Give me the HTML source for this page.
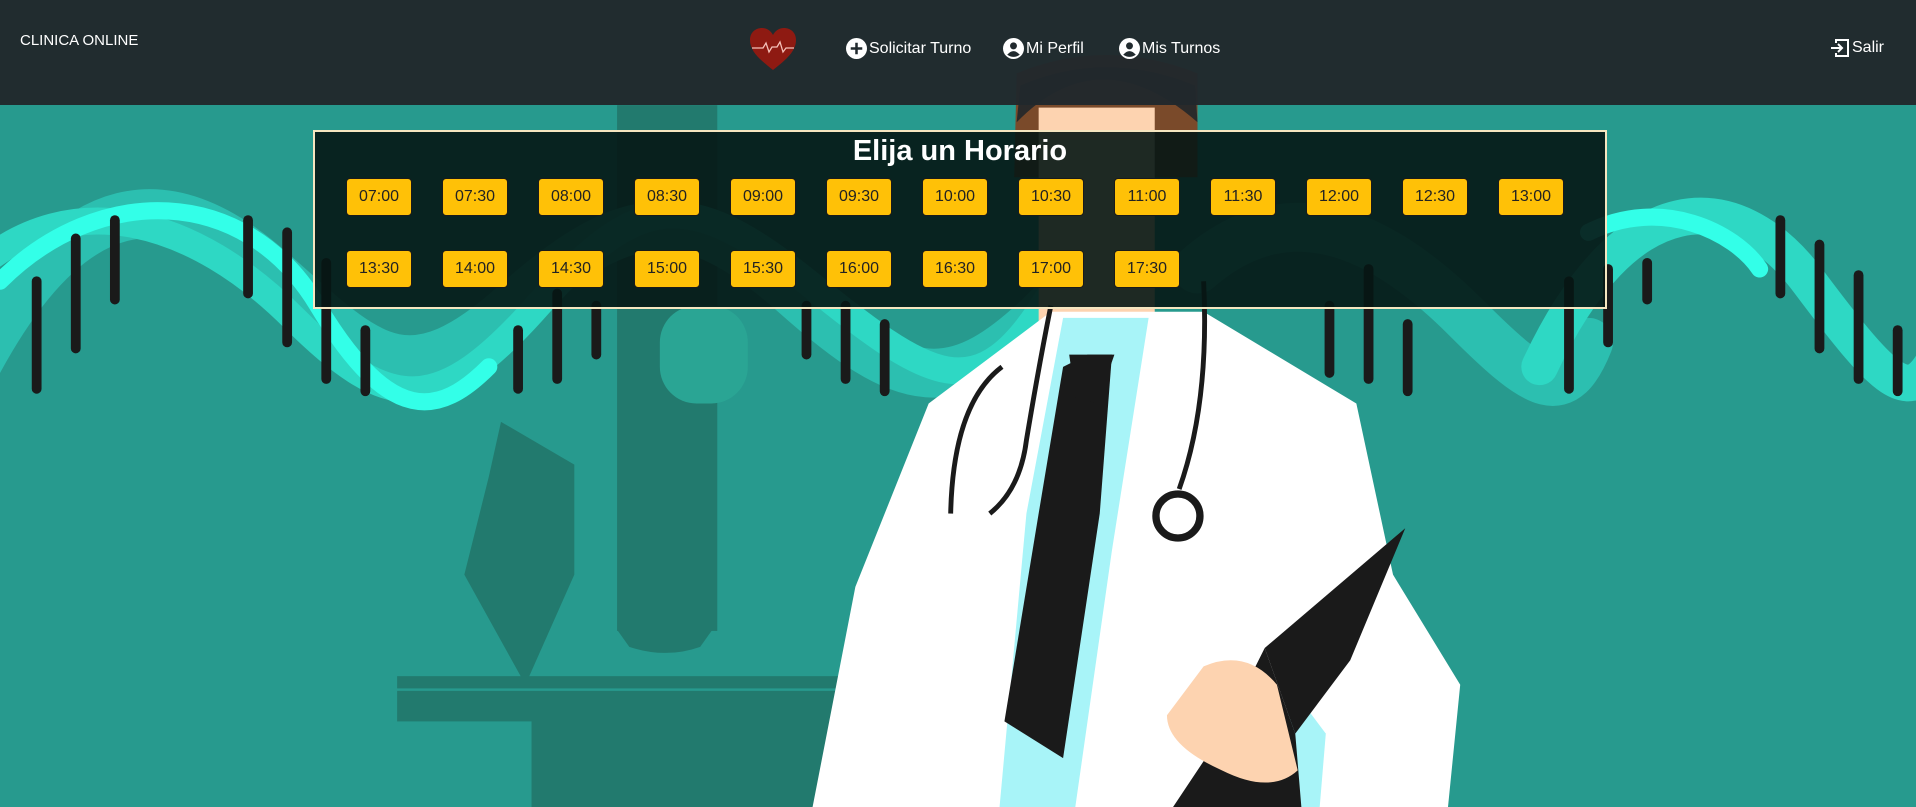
<!DOCTYPE html>
<html><head><meta charset="utf-8">
<style>
*{margin:0;padding:0;box-sizing:border-box}
body{width:1916px;height:807px;overflow:hidden;position:relative;font-family:"Liberation Sans",Roboto,sans-serif;background:#279a8e}
#bg{position:absolute;left:0;top:0}
nav{position:absolute;left:0;top:0;width:1916px;height:105px;background:rgba(33,40,44,.97);color:#fff;font-size:16px}
.brand{position:absolute;left:20px;top:32px;font-size:15px}
.item{position:absolute;top:38px;display:flex;align-items:center;gap:2px}
.panel{position:absolute;left:313px;top:130px;width:1294px;height:179px;background:rgba(6,22,20,.9);border:2px solid #f5e6c0}
.panel h1{position:absolute;left:0;right:0;top:3px;text-align:center;color:#fff;font-size:29px;font-weight:bold}
.b{position:absolute;width:66px;height:38px;background:#ffc107;border-radius:4px;border:1px solid #1a1a1a;color:#222;font-size:16px;display:flex;align-items:center;justify-content:center}
</style></head><body>
<svg id="bg" width="1916" height="807" viewBox="0 0 1568 660" preserveAspectRatio="none">
<rect width="1568" height="660" fill="#279a8e"/>
<g fill="#227a6e">
<rect x="505" y="86" width="82" height="430"/>
<polygon points="410,345 470,380 470,470 430,560 380,470 400,390"/>
<rect x="540" y="250" width="72" height="80" rx="30" fill="#2aa594"/>
<rect x="325" y="553" width="365" height="10"/>
<rect x="325" y="565" width="110" height="25"/>
<rect x="435" y="565" width="255" height="95"/>
<path d="M505 515 h78 l-10 14 q-28 10 -58 0z"/>
</g>
<g fill="none" stroke-linecap="round">
<path d="M-20 300 C60 150 140 150 220 220 S330 330 420 250 S560 160 650 240 S780 330 860 250" stroke="#2cbfb0" stroke-width="40"/>
<path d="M-20 220 C60 150 160 180 240 260 S360 340 440 250 S560 150 660 230 S800 340 860 240" stroke="#2ed8c4" stroke-width="22"/>
<path d="M0 230 C80 150 200 150 260 250 S360 340 400 300" stroke="#33ffe8" stroke-width="14"/>
<path d="M980 220 C1060 150 1140 200 1200 260 S1280 330 1300 280" stroke="#2cbfb0" stroke-width="40"/>
<path d="M1260 300 C1330 150 1420 150 1480 230 S1560 330 1580 300" stroke="#2ed8c4" stroke-width="30"/>
<path d="M1300 190 C1360 160 1420 190 1440 220" stroke="#33ffe8" stroke-width="14"/>
<g stroke="#1a1a1a" stroke-width="8">
<line x1="30" y1="230" x2="30" y2="318"/><line x1="62" y1="195" x2="62" y2="285"/><line x1="94" y1="180" x2="94" y2="245"/>
<line x1="203" y1="180" x2="203" y2="240"/><line x1="235" y1="190" x2="235" y2="280"/><line x1="267" y1="215" x2="267" y2="310"/><line x1="299" y1="270" x2="299" y2="320"/>
<line x1="424" y1="270" x2="424" y2="318"/><line x1="456" y1="240" x2="456" y2="310"/><line x1="488" y1="250" x2="488" y2="290"/>
<line x1="660" y1="250" x2="660" y2="290"/><line x1="692" y1="250" x2="692" y2="310"/><line x1="724" y1="265" x2="724" y2="320"/>
<line x1="1088" y1="250" x2="1088" y2="305"/><line x1="1120" y1="220" x2="1120" y2="310"/><line x1="1152" y1="265" x2="1152" y2="320"/>
<line x1="1284" y1="230" x2="1284" y2="318"/><line x1="1316" y1="220" x2="1316" y2="280"/><line x1="1348" y1="215" x2="1348" y2="245"/>
<line x1="1457" y1="180" x2="1457" y2="240"/><line x1="1489" y1="200" x2="1489" y2="285"/><line x1="1521" y1="225" x2="1521" y2="310"/><line x1="1553" y1="270" x2="1553" y2="320"/>
</g></g>
<path d="M832 60 Q905 30 980 60 L980 145 L830 145 Z" fill="#7a4a2a"/>
<rect x="850" y="88" width="95" height="192" fill="#fdd3b0"/>
<path d="M832 100 Q900 30 980 100 L978 70 Q905 40 835 70Z" fill="#2a2a2a"/>
<path d="M860 255 L985 255 L1110 330 L1140 470 L1195 560 L1185 660 L665 660 L700 480 L760 330 Z" fill="#fff"/>
<path d="M870 260 L940 260 L910 450 L880 660 L818 660 L840 420 Z" fill="#a8f4f8"/>
<path d="M1055 560 L1085 600 L1080 660 L1050 660 Z" fill="#a8f4f8"/>
<path d="M890 290 L910 290 L900 420 L870 620 L822 590 L850 420 L870 300 Z" fill="#1a1a1a"/>
<path d="M875 290 L912 290 L898 330 L880 325 Z" fill="#1a1a1a"/>
<path d="M1035 530 L1150 432 L1105 540 L1060 600 Z" fill="#1a1a1a"/>
<path d="M1035 530 L1000 600 L960 660 L1065 660 L1060 600 Z" fill="#1a1a1a"/>
<path d="M985 545 Q1020 530 1045 560 L1062 630 Q1040 650 1000 630 Q955 610 955 585 Z" fill="#fdd3b0"/>
<g fill="none" stroke="#1a1a1a" stroke-width="4">
<path d="M860 250 Q850 300 840 360 Q835 400 810 420 M820 300 Q780 330 778 420"/>
<path d="M985 230 Q990 330 965 400"/>
<circle cx="964" cy="422" r="18" stroke-width="6"/>
</g>
</svg>
<nav>
<div class="brand">CLINICA ONLINE</div>
<svg style="position:absolute;left:749px;top:27px" width="48" height="44" viewBox="0 0 48 44"><path d="M24 43 C10 32 1 24 1 13 C1 5 7 1 13 1 C18 1 22 4 24 8 C26 4 30 1 35 1 C41 1 47 5 47 13 C47 24 38 32 24 43Z" fill="#8e1a12"/><path d="M3 21 H14 L17 16 L20 25 L23 20 H28 L31 15 L34 25 L37 21 H45" stroke="#f5c0b8" stroke-width="1.3" fill="none"/></svg>
<div class="item" style="left:846px"><svg width="21" height="21" viewBox="0 0 20 20"><circle cx="10" cy="10" r="10" fill="#fff"/><path d="M10 4.5v11M4.5 10h11" stroke="#212a2e" stroke-width="2.4"/></svg>Solicitar Turno</div>
<div class="item" style="left:1003px"><svg width="21" height="21" viewBox="0 0 20 20"><circle cx="10" cy="10" r="10" fill="#fff"/><circle cx="10" cy="7.5" r="3.3" fill="#212a2e"/><path d="M4 16 Q10 9 16 16 Q10 20 4 16Z" fill="#212a2e"/></svg>Mi Perfil</div>
<div class="item" style="left:1119px"><svg width="21" height="21" viewBox="0 0 20 20"><circle cx="10" cy="10" r="10" fill="#fff"/><circle cx="10" cy="7.5" r="3.3" fill="#212a2e"/><path d="M4 16 Q10 9 16 16 Q10 20 4 16Z" fill="#212a2e"/></svg>Mis Turnos</div>
<div class="item" style="left:1830px"><svg width="20" height="20" viewBox="0 0 20 20" fill="none" stroke="#fff" stroke-width="2"><path d="M6 5V2h12v16H6v-3"/><path d="M1 10h11M8 6l4 4-4 4"/></svg>Salir</div>
</nav>
<div class="panel">
<h1>Elija un Horario</h1>
<div class="b" style="left:31px;top:46px">07:00</div>
<div class="b" style="left:127px;top:46px">07:30</div>
<div class="b" style="left:223px;top:46px">08:00</div>
<div class="b" style="left:319px;top:46px">08:30</div>
<div class="b" style="left:415px;top:46px">09:00</div>
<div class="b" style="left:511px;top:46px">09:30</div>
<div class="b" style="left:607px;top:46px">10:00</div>
<div class="b" style="left:703px;top:46px">10:30</div>
<div class="b" style="left:799px;top:46px">11:00</div>
<div class="b" style="left:895px;top:46px">11:30</div>
<div class="b" style="left:991px;top:46px">12:00</div>
<div class="b" style="left:1087px;top:46px">12:30</div>
<div class="b" style="left:1183px;top:46px">13:00</div>
<div class="b" style="left:31px;top:118px">13:30</div>
<div class="b" style="left:127px;top:118px">14:00</div>
<div class="b" style="left:223px;top:118px">14:30</div>
<div class="b" style="left:319px;top:118px">15:00</div>
<div class="b" style="left:415px;top:118px">15:30</div>
<div class="b" style="left:511px;top:118px">16:00</div>
<div class="b" style="left:607px;top:118px">16:30</div>
<div class="b" style="left:703px;top:118px">17:00</div>
<div class="b" style="left:799px;top:118px">17:30</div>
</div>
</body></html>
